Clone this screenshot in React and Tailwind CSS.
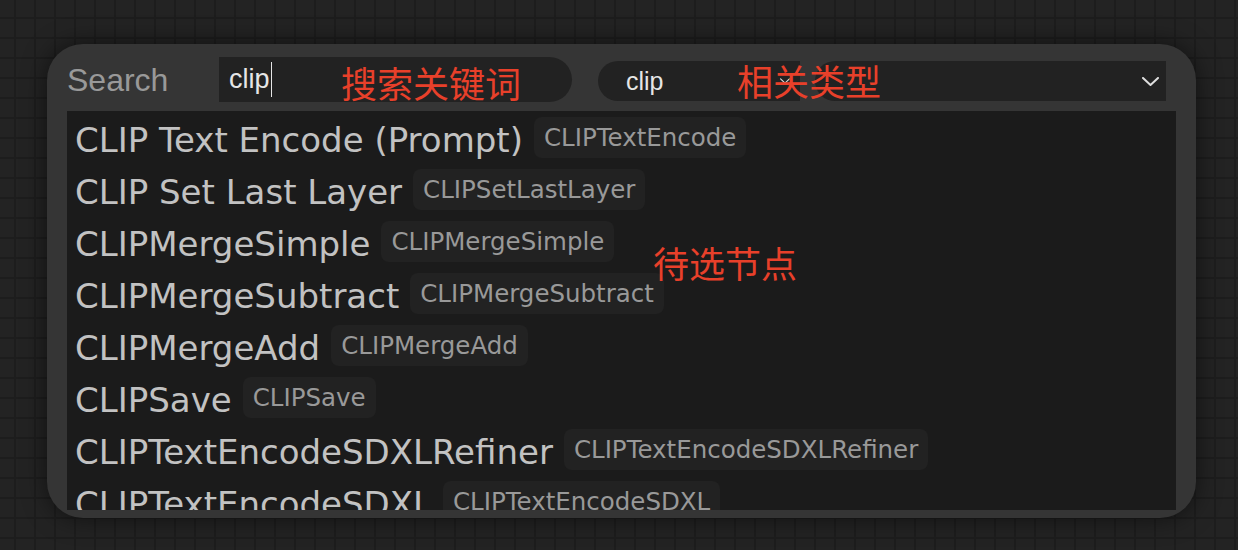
import React from "react";

const rows = [
  ["CLIP Text Encode (Prompt)", "CLIPTextEncode"],
  ["CLIP Set Last Layer", "CLIPSetLastLayer"],
  ["CLIPMergeSimple", "CLIPMergeSimple"],
  ["CLIPMergeSubtract", "CLIPMergeSubtract"],
  ["CLIPMergeAdd", "CLIPMergeAdd"],
  ["CLIPSave", "CLIPSave"],
  ["CLIPTextEncodeSDXLRefiner", "CLIPTextEncodeSDXLRefiner"],
  ["CLIPTextEncodeSDXL", "CLIPTextEncodeSDXL"],
];

function Chevron({ className }) {
  return (
    <svg className={className} viewBox="0 0 17 9" fill="none" stroke="currentColor" strokeWidth="2" strokeLinecap="round" strokeLinejoin="round">
      <path d="M1 1 L8.5 8 L16 1" />
    </svg>
  );
}

export default function App() {
  return (
    <div className="relative w-[1238px] h-[550px] overflow-hidden bg-[#232323] bg-[linear-gradient(to_right,#1d1d1d_2px,transparent_2px),linear-gradient(to_bottom,#1d1d1d_2px,transparent_2px)] bg-[size:20px_20px] bg-[position:14px_17px] pl-[47px] pt-[44px]">
      <div className="w-[1149px] h-[474px] rounded-[36px] bg-[#353535] shadow-[0_0_24px_rgba(0,0,0,0.55)] px-[20px] pb-[8px] flex flex-col">
        {/* header */}
        <div className="h-[67px] shrink-0 flex items-start pt-[13px]">
          <div className="w-[152px] h-[45px] flex items-center text-[32px] text-[#999] font-['Liberation_Sans',Arial,sans-serif] leading-none">
            Search
          </div>
          <div className="w-[353px] h-[45px] bg-[#222] rounded-r-full flex items-center pl-[10px] font-['Liberation_Sans',Arial,sans-serif] text-[27px] text-[#e6e6e6] leading-none">
            <span>clip</span>
            <span className="ml-[1px] w-[1px] h-[35px] bg-[#e6e6e6]"></span>
          </div>
          <div className="ml-[26px] mt-[4px] w-[202px] h-[40px] bg-[#222] rounded-l-[20px] flex items-center pl-[28px] pr-[10px] font-['Liberation_Sans',Arial,sans-serif] text-[25px] text-[#e6e6e6] leading-none">
            <span className="flex-1">clip</span>
            <Chevron className="w-[10px] h-[6px] text-[#ddd]" />
          </div>
          <div className="ml-[15px] mt-[4px] w-[351px] h-[40px] bg-[#222] rounded-l-[20px] flex items-center justify-end pr-[7px]">
            <Chevron className="w-[17px] h-[9px] text-[#dedede]" />
          </div>
        </div>
        {/* list */}
        <div className="flex-1 bg-[#1b1b1b] overflow-hidden pl-[8px] pt-[3px] font-['DejaVu_Sans',Verdana,sans-serif]">
          {rows.map(([name, type]) => (
            <div key={name} className="h-[52px] flex items-start gap-[11px] whitespace-nowrap">
              <span className="text-[34px] leading-[52px] text-[#c2c2c2]">{name}</span>
              <span className="mt-[3px] h-[41px] leading-[41px] px-[10px] rounded-[8px] bg-[#222] text-[24.5px] text-[#999]">{type}</span>
            </div>
          ))}
        </div>
      </div>

      {/* annotations */}
      <div className="absolute left-[341px] top-[62px] text-[36px] leading-[40px] text-[#e8402a] font-['Noto_Sans_CJK_SC',sans-serif]">搜索关键词</div>
      <div className="absolute left-[737px] top-[60px] text-[36px] leading-[40px] text-[#e8402a] font-['Noto_Sans_CJK_SC',sans-serif]">相关类型</div>
      <div className="absolute left-[653px] top-[242px] text-[36px] leading-[40px] text-[#e8402a] font-['Noto_Sans_CJK_SC',sans-serif]">待选节点</div>
    </div>
  );
}
